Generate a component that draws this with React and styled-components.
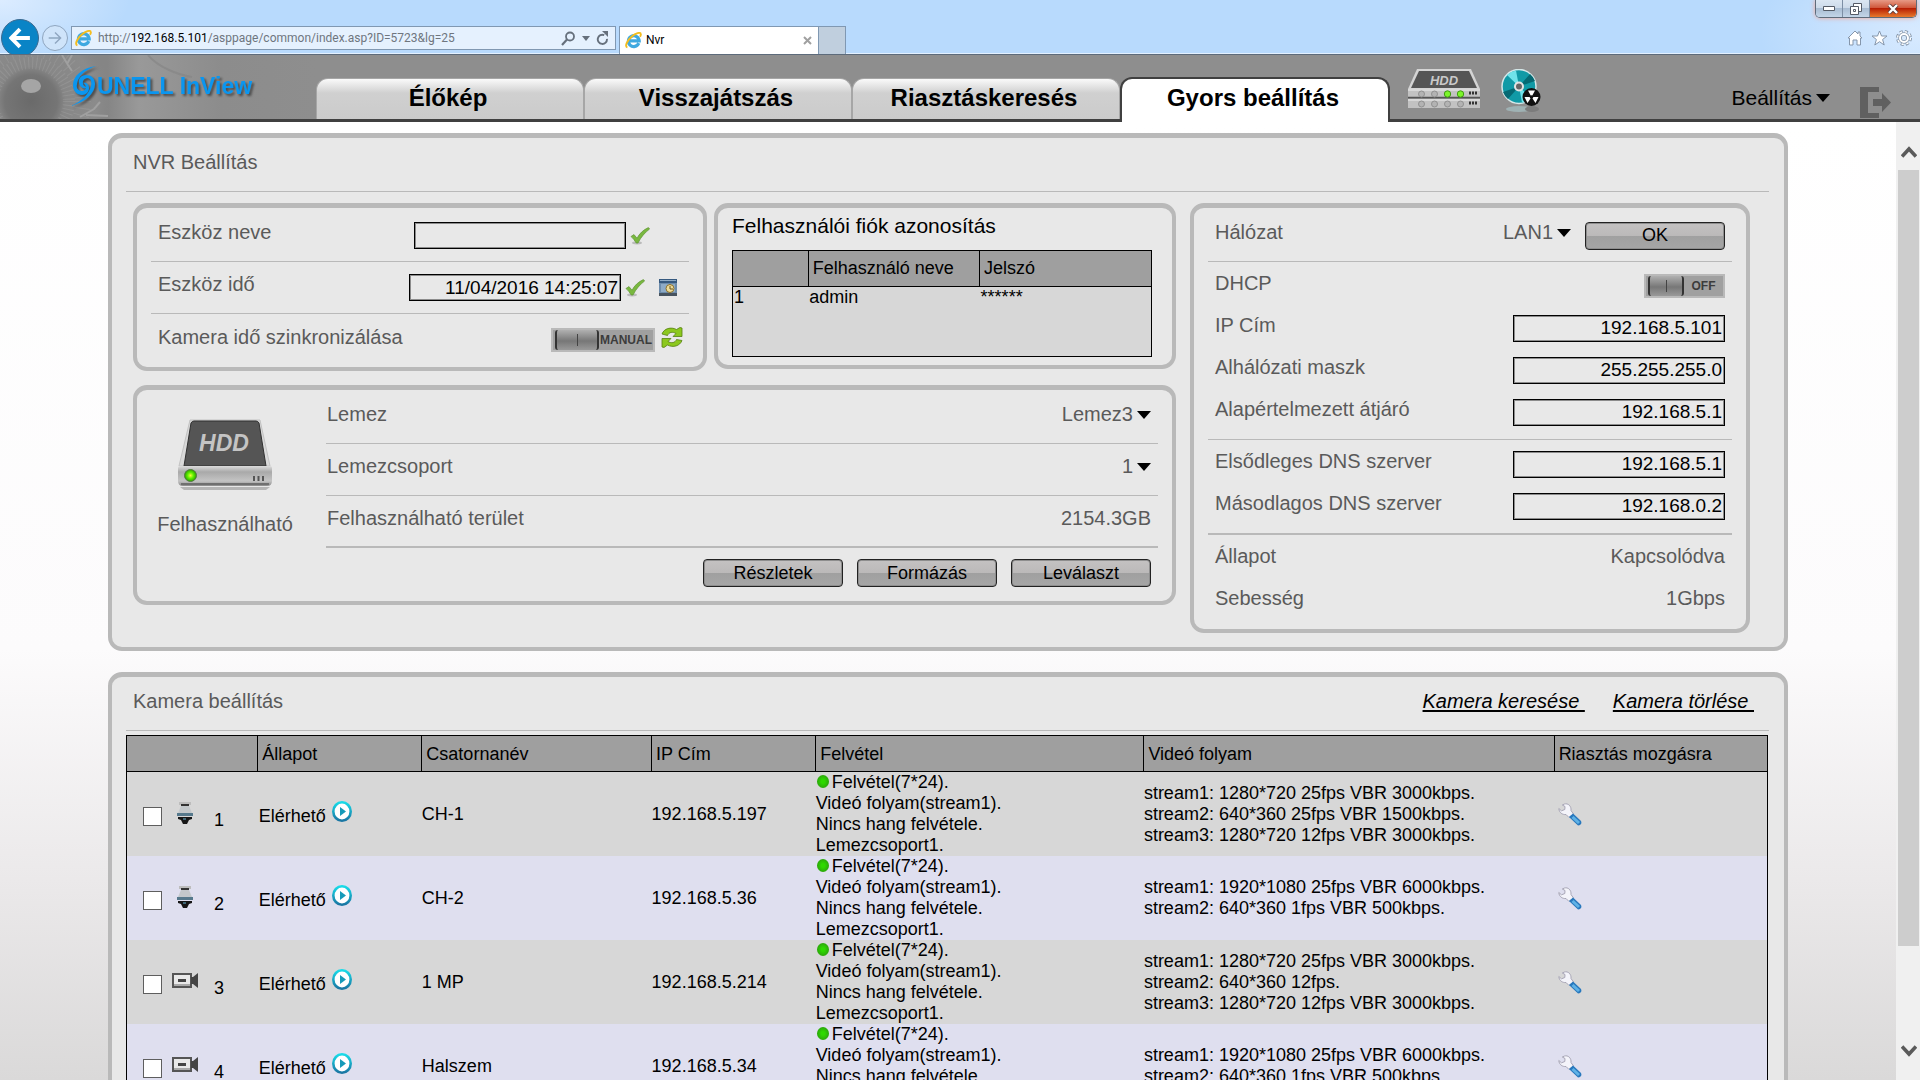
import React from "react";
//Style
import styled, { createGlobalStyle } from "styled-components";

//Data
const tabs = ["Élőkép", "Visszajátszás", "Riasztáskeresés", "Gyors beállítás"];

const recording = [
  "Felvétel(7*24).",
  "Videó folyam(stream1).",
  "Nincs hang felvétele.",
  "Lemezcsoport1.",
];

const cameras = [
  {
    id: 1,
    type: "dome",
    name: "CH-1",
    ip: "192.168.5.197",
    streams: [
      "stream1: 1280*720 25fps VBR 3000kbps.",
      "stream2: 640*360 25fps VBR 1500kbps.",
      "stream3: 1280*720 12fps VBR 3000kbps.",
    ],
  },
  {
    id: 2,
    type: "dome",
    name: "CH-2",
    ip: "192.168.5.36",
    streams: [
      "stream1: 1920*1080 25fps VBR 6000kbps.",
      "stream2: 640*360 1fps VBR 500kbps.",
    ],
  },
  {
    id: 3,
    type: "box",
    name: "1 MP",
    ip: "192.168.5.214",
    streams: [
      "stream1: 1280*720 25fps VBR 3000kbps.",
      "stream2: 640*360 12fps.",
      "stream3: 1280*720 12fps VBR 3000kbps.",
    ],
  },
  {
    id: 4,
    type: "box",
    name: "Halszem",
    ip: "192.168.5.34",
    streams: [
      "stream1: 1920*1080 25fps VBR 6000kbps.",
      "stream2: 640*360 1fps VBR 500kbps.",
    ],
  },
];

const addressFields = [
  { id: "ip", label: "IP Cím", value: "192.168.5.101" },
  { id: "mask", label: "Alhálózati maszk", value: "255.255.255.0" },
  { id: "gateway", label: "Alapértelmezett átjáró", value: "192.168.5.1" },
];

const dnsFields = [
  { id: "dns1", label: "Elsődleges DNS szerver", value: "192.168.5.1" },
  { id: "dns2", label: "Másodlagos DNS szerver", value: "192.168.0.2" },
];

// Icons
const IeIcon = () => (
  <svg width="17" height="17" viewBox="0 0 17 17" aria-hidden="true">
    <path
      d="M13.8 11.2A5.4 5.4 0 1 1 14.2 8.9H4.6"
      fill="none"
      stroke="#3fa9e0"
      strokeWidth="3.2"
    />
    <path
      d="M2.4 15.4C-.6 14.6 2 8.6 6.8 4.6 10.6 1.4 15.4-.4 15.8 2c.2 1-.3 2-.8 2.8"
      fill="none"
      stroke="#f4bd1e"
      strokeWidth="1.9"
    />
  </svg>
);

const Arrow = ({ size, back }) => (
  <svg width={size} height={size} viewBox="0 0 20 20" aria-hidden="true">
    <path
      d={back ? "M19 10H3M10 2 2 10l8 8" : "M1 10h16M10 2l8 8-8 8"}
      fill="none"
      stroke={back ? "#fff" : "#8fa6c0"}
      strokeWidth={back ? 3.6 : 2}
    />
  </svg>
);

const SearchIcon = () => (
  <svg width="15" height="15" viewBox="0 0 15 15" aria-hidden="true">
    <circle cx="9" cy="5.5" r="4" fill="none" stroke="#66707c" strokeWidth="1.8" />
    <path d="M6 8.6 1 14" stroke="#66707c" strokeWidth="2.2" />
  </svg>
);

const RefreshIcon = () => (
  <svg width="13" height="14" viewBox="0 0 13 14" aria-hidden="true">
    <path
      d="M10.6 6.2A4.6 4.6 0 1 1 6.8 3.6"
      fill="none"
      stroke="#66707c"
      strokeWidth="1.9"
      transform="rotate(20 6 8)"
    />
    <path d="M6 0h6v6z" fill="#66707c" />
  </svg>
);

const Triangle = () => (
  <svg width="14" height="8" viewBox="0 0 14 8" aria-hidden="true">
    <path d="M0 0h14L7 8z" fill="#000" />
  </svg>
);

const SmallTriangle = () => (
  <svg width="8" height="5" viewBox="0 0 8 5" aria-hidden="true">
    <path d="M0 0h8L4 5z" fill="#66707c" />
  </svg>
);

const CheckIcon = () => (
  <svg width="20" height="18" viewBox="0 0 20 18" aria-hidden="true">
    <ellipse cx="7" cy="16" rx="5" ry="1.4" fill="#bbb" />
    <path
      d="M1 9.5 4 7.6l3 3.6C9.6 6.5 13 3 18.4.6L19.6 2C15 5.500 10.800 10.200 8 16H6.200C4.800 13.400 3 11.200 1 9.500z"
      fill="#79b83f"
      stroke="#5f9433"
      strokeWidth=".7"
    />
  </svg>
);

const CalendarIcon = () => (
  <svg width="18" height="17" viewBox="0 0 18 17" aria-hidden="true">
    <path d="M0 0h18v17H0z" fill="#6d8cab" />
    <path d="M0 0h18v4H0z" fill="#36597f" />
    <path d="M1 1h16v1H1z" fill="#8fabc6" />
    <path d="M0 14h18v3H0z" fill="#47535f" />
    <path d="M2 5h14v8H2z" fill="#8eabc7" />
    <circle cx="11" cy="9.500" r="4" fill="#eedd9b" stroke="#8d6f26" />
    <path d="M11 7v3h3" fill="none" stroke="#6a521a" />
  </svg>
);

const SyncIcon = () => (
  <svg width="22" height="21" viewBox="0 0 22 21" aria-hidden="true">
    <g fill="#8cc81e" stroke="#557f12" strokeWidth=".8">
      <path d="M1 7C3 1.500 10-.5 15.500 2.500L19 .5 21 1v8.500h-9l3-3C11.500 4.500 8 5 6.500 8.500z" />
      <path d="M21 13.500c-2 5.500-9 7.500-14.500 4.500L3 20.500 1 20v-8.500h9l-3 3c3.500 2 7 1.500 8.500-2z" />
    </g>
  </svg>
);

const HddIcon = () => (
  <svg width="96" height="72" viewBox="0 0 96 72" aria-hidden="true">
    <defs>
      <linearGradient id="hddFront" x1="0" y1="0" x2="0" y2="1">
        <stop offset="0" stopColor="#dcdcdc" />
        <stop offset=".3" stopColor="#a9a9a9" />
        <stop offset=".75" stopColor="#c4c4c4" />
        <stop offset="1" stopColor="#8a8a8a" />
      </linearGradient>
      <radialGradient id="hddLed">
        <stop offset="0" stopColor="#f0ff3a" />
        <stop offset=".5" stopColor="#5bf000" />
        <stop offset="1" stopColor="#2f9c00" />
      </radialGradient>
    </defs>
    <path d="M3 69h90l-4 3H7z" fill="#b5b5b5" />
    <path d="M13 2h70l10 46H2z" fill="#d9d9d9" stroke="#c2c2c2" />
    <path d="M17 3h62q2 0 3 2l7 43H7l7-43q1-2 3-2z" fill="#555" stroke="#303030" />
    <path d="M1 50q0-2 2-2h90q2 0 2 2v13q0 5-5 5H6q-5 0-5-5z" fill="url(#hddFront)" />
    <path d="M4 66h88" stroke="#707070" strokeWidth="2" />
    <circle cx="13.500" cy="57.500" r="6" fill="url(#hddLed)" stroke="#537a45" />
    <path d="M77 58v5M81.500 58v5M86 58v5" stroke="#555" strokeWidth="2" />
    <text
      x="47"
      y="33"
      textAnchor="middle"
      fill="#c4c4c4"
      fontFamily="Liberation Sans, sans-serif"
      fontSize="23"
      fontStyle="italic"
      fontWeight="bold"
    >
      HDD
    </text>
  </svg>
);

const ServerIcon = () => (
  <svg width="74" height="40" viewBox="0 0 74 40" aria-hidden="true">
    <path d="M10 0h54l9 20H1z" fill="#d4d4d4" />
    <path d="M12 2h50l8 17H4z" fill="#555" />
    <path d="M1 20h72v8H1zM1 30h72v9H1z" fill="#c2c2c2" />
    <path d="M1 21h72M1 31h72" stroke="#eee" />
    <path d="M1 28.500h72" stroke="#555" strokeWidth="1.500" />
    <g fill="#b3b3b3" stroke="#909090">
      <circle cx="14.500" cy="25" r="3" />
      <circle cx="27.500" cy="25" r="3" />
      <circle cx="14.500" cy="35" r="3" />
      <circle cx="27.500" cy="35" r="3" />
      <circle cx="40.500" cy="35" r="3" />
      <circle cx="53.500" cy="35" r="3" />
    </g>
    <g fill="#7cf52a" stroke="#3f9a12">
      <circle cx="40.500" cy="25" r="3.200" />
      <circle cx="53.500" cy="25" r="3.200" />
    </g>
    <path d="M62 24h8M62 34h8" stroke="#333" strokeWidth="3" strokeDasharray="2 1" />
    <text
      x="37"
      y="16"
      textAnchor="middle"
      fill="#c9c9c9"
      fontFamily="Liberation Sans, sans-serif"
      fontSize="13"
      fontStyle="italic"
      fontWeight="bold"
    >
      HDD
    </text>
  </svg>
);

const DiscIcon = () => (
  <svg width="40" height="44" viewBox="0 0 40 44" aria-hidden="true">
    <ellipse cx="18" cy="40" rx="13" ry="3" fill="#9fb2b4" />
    <ellipse cx="31" cy="40" rx="7" ry="3" fill="#7c7c7c" />
    <circle cx="18" cy="17.500" r="17" fill="#109aa6" stroke="#d5e7e8" strokeWidth="1.500" />
    <path d="M18 17.500 6 6A17 17 0 0 1 15 1.500zM18 17.500 30 29A17 17 0 0 1 21 33.500z" fill="#6fe3ea" />
    <path d="M18 17.500 29 5a17 17 0 0 1 5 7zM18 17.500 7 30a17 17 0 0 1-5-7z" fill="#056973" />
    <circle cx="18" cy="17.500" r="5" fill="#e4e4e4" />
    <circle cx="18" cy="17.500" r="3" fill="#666" />
    <circle cx="30.500" cy="28" r="9" fill="#111" />
    <path
      d="M30.500 28 27 21.500h7zM30.500 28H23.500l3 6zM30.500 28h7l-3 6z"
      fill="#fff"
    />
    <circle cx="30.500" cy="28" r="1.800" fill="#111" />
  </svg>
);

const LogoutIcon = () => (
  <svg width="32" height="31" viewBox="0 0 32 31" aria-hidden="true">
    <path d="M19 0H0v31h19v-5H8V5h11z" fill="#606060" />
    <path d="M13 12h9V6l9 9.500L22 25v-6h-9z" fill="#606060" />
  </svg>
);

const EyeArt = () => (
  <svg width="316" height="64" viewBox="0 0 316 64" aria-hidden="true">
    <defs>
      <linearGradient id="eyeSkin" x1="0" x2="1">
        <stop offset="0" stopColor="#858585" />
        <stop offset=".34" stopColor="#858585" />
        <stop offset=".44" stopColor="#999" />
        <stop offset=".7" stopColor="#8c8c8c" />
        <stop offset="1" stopColor="#8e8e8e" />
      </linearGradient>
      <radialGradient id="eyeIris">
        <stop offset="0" stopColor="#6a6a6a" />
        <stop offset=".32" stopColor="#757575" />
        <stop offset=".42" stopColor="#878787" />
        <stop offset=".8" stopColor="#8b8b8b" />
        <stop offset="1" stopColor="#858585" stopOpacity="0" />
      </radialGradient>
    </defs>
    <path d="M0 0h316v64H0z" fill="url(#eyeSkin)" />
    <circle cx="31" cy="46" r="82" fill="url(#eyeIris)" />
    <g fill="none" stroke="#a0a0a0" opacity=".45">
      <circle cx="31" cy="46" r="38" strokeWidth="12" strokeDasharray="1 3" />
      <circle cx="31" cy="46" r="52" strokeWidth="16" strokeDasharray="1 6" />
    </g>
    <path d="m62 0 6 10 4 6M72 0l-5 9M80 62l14-8 6-7M86 60l22 1" fill="none" stroke="#a0a0a0" strokeWidth="2" />
    <ellipse cx="31" cy="31" rx="10" ry="7" fill="#a5a5a5" />
    <path d="M148 0c10 12 30 20 44 22" fill="none" stroke="#848484" strokeWidth="2" opacity=".6" />
  </svg>
);

const Swirl = () => (
  <svg width="26" height="42" viewBox="0 0 26 42" aria-hidden="true">
    <g fill="#0a96f0">
      <path d="M25 1C11 3 2 11 2 20c0 6 4 10 9 10 4 0 7-3 7-7s-3-6-6-5c4 1 4 8-1 8-4 0-6-3-5-7C7 11 14 5 25 1z" />
      <path d="M0 41c14-4 24-12 24-22 0-6-4-9-9-9s-8 4-7 8c1 5 6 7 8 4-5 0-6-8 0-9 4 0 5 4 4 8-2 8-9 15-20 20z" />
    </g>
  </svg>
);

const DomeIcon = () => (
  <svg width="16" height="24" viewBox="0 0 16 24" aria-hidden="true">
    <path d="M2 1h12v3H2z" fill="#bdbdbd" />
    <path d="M4 3h8v2H4z" fill="#333" />
    <path d="M4 5h8l3 7H1z" fill="#c3c8cb" />
    <path d="M0 12h16v3H0z" fill="#56798c" />
    <path d="M1 16h14v2l-3 1-2 4H6l-2-4-3-1z" fill="#161616" />
    <path d="M6 17h3v2H6z" fill="#3f6675" />
  </svg>
);

const BoxCamIcon = () => (
  <svg width="26" height="16" viewBox="0 0 26 16" aria-hidden="true">
    <path d="M1 1h18v13H1z" fill="#e9e9e9" stroke="#555" strokeWidth="2" />
    <path d="M2 11h16v2H2z" fill="#aaa" />
    <path d="M6 6h8v3H6z" fill="#444" />
    <path d="M19 4h2l5-4v15l-5-4h-2z" fill="#444" />
  </svg>
);

const PlayIcon = () => (
  <svg width="20" height="21" viewBox="0 0 20 21" aria-hidden="true">
    <defs>
      <linearGradient id="playRing" x1="0" y1="0" x2="0" y2="1">
        <stop offset="0" stopColor="#19dbe8" />
        <stop offset="1" stopColor="#1a76a3" />
      </linearGradient>
    </defs>
    <ellipse cx="10" cy="10.500" rx="8.700" ry="9.200" fill="#fff" stroke="url(#playRing)" strokeWidth="2.600" />
    <path d="M8 6 14 10.500 8 15z" fill="#169ab9" />
  </svg>
);

const WrenchIcon = () => (
  <svg width="24" height="23" viewBox="0 0 24 23" aria-hidden="true">
    <path
      d="M6.500 1C10 0 13.500 3 13 7.500L15.500 11 11 14.500 8 11.500C4.500 12 1 9.500.8 5.500l2.700 2.300L6.800 6.500 7 3.500 4.300 2z"
      fill="#f4f4fa"
      stroke="#a8a6b6"
    />
    <path d="M15 10.500 23 18q1.500 4-3 4.500L11 14z" fill="#2878bd" />
    <path d="m14.500 14 6.500 6" stroke="#5fb2e6" strokeWidth="3" />
  </svg>
);

const Chevron = ({ down }) => (
  <svg width="16" height="13" viewBox="0 0 16 13" aria-hidden="true">
    <path
      d={down ? "M1 2.500 8 10l7-7.500" : "M1 10.500 8 3l7 7.500"}
      fill="none"
      stroke="#5a5a5a"
      strokeWidth="3.600"
    />
  </svg>
);

// Drop-down with its own arrow
const Picker = ({ id, value }) => (
  <PickerWrap>
    <PickerSelect id={id} defaultValue={value}>
      <option>{value}</option>
    </PickerSelect>
    <Triangle />
  </PickerWrap>
);

const Browser = () => (
  <TopBar>
    <Nav>
      <BackButton aria-label="Vissza">
        <Arrow size={22} back />
      </BackButton>
      <ForwardButton aria-label="Előre">
        <Arrow size={14} />
      </ForwardButton>
      <Address>
        <IeIcon />
        <Url>
          http://<b>192.168.5.101</b>/asppage/common/index.asp?ID=5723&amp;lg=25
        </Url>
        <SearchIcon />
        <SmallTriangle />
        <RefreshIcon />
      </Address>
      <PageTab>
        <IeIcon />
        <span>Nvr</span>
        <TabClose aria-label="Lap bezárása">
          <svg width="9" height="9" viewBox="0 0 9 9">
            <path d="m1 1 7 7M8 1 1 8" stroke="#a0a0a0" strokeWidth="2" />
          </svg>
        </TabClose>
      </PageTab>
      <NewTab aria-label="Új lap" />
    </Nav>
    <WindowSide>
      <WindowButtons>
        <WindowButton aria-label="Kis méret">
          <svg width="12" height="6" viewBox="0 0 12 6">
            <path d="M.5.500h11v4H.5z" fill="#fff" stroke="#555b66" />
          </svg>
        </WindowButton>
        <WindowButton aria-label="Előző méret">
          <svg width="12" height="12" viewBox="0 0 12 12">
            <path d="M3.500.500h8v8h-8z" fill="#fff" stroke="#555b66" />
            <path d="M.5 3.500h8v8h-8z" fill="#fff" stroke="#555b66" />
            <path d="M3.500 6.500h2v2h-2z" fill="none" stroke="#555b66" />
          </svg>
        </WindowButton>
        <WindowButton $close aria-label="Bezárás">
          <svg width="12" height="10" viewBox="0 0 12 10">
            <path d="m2 1 8 8M10 1 2 9" stroke="#5c3a3a" strokeWidth="4" />
            <path d="m2 1 8 8M10 1 2 9" stroke="#fff" strokeWidth="2.400" />
          </svg>
        </WindowButton>
      </WindowButtons>
      <Tools>
        <svg width="16" height="16" viewBox="0 0 16 16" fill="#fff" stroke="#8596ab">
          <path d="M8 1 1 8h1.500v7H6v-5h4v5h3.500V8H15l-2-2V2h-2v2z" />
        </svg>
        <svg width="17" height="16" viewBox="0 0 17 16" fill="#fff" stroke="#8596ab">
          <path d="m8.500 1 2 5h5.500l-4.400 3.500 1.600 5.500-4.700-3.300L3.800 15l1.600-5.500L1 6h5.500z" />
        </svg>
        <svg width="16" height="16" viewBox="0 0 16 16">
          <circle cx="8" cy="8" r="6.200" fill="none" stroke="#8596ab" strokeWidth="3.600" strokeDasharray="2.900 1.970" />
          <circle cx="8" cy="8" r="6" fill="none" stroke="#fff" strokeWidth="2.200" strokeDasharray="2.200 2.510" />
          <circle cx="8" cy="8" r="4" fill="#d6e8fb" stroke="#8596ab" strokeWidth="3.600" />
          <circle cx="8" cy="8" r="4" fill="none" stroke="#fff" strokeWidth="2" />
        </svg>
      </Tools>
    </WindowSide>
  </TopBar>
);

const Header = () => (
  <HeaderBar>
    <Brand>
      <EyeArt />
      <Logo>
        <Swirl />
        <span>UNELL InView</span>
      </Logo>
    </Brand>
    <Tabs>
      {tabs.map((tab, i) => (
        <Tab key={tab} $active={i === 3}>
          {tab}
        </Tab>
      ))}
    </Tabs>
    <StatusIcons>
      <ServerIcon />
      <DiscIcon />
    </StatusIcons>
    <SettingsButton>
      Beállítás
      <Triangle />
    </SettingsButton>
    <LogoutButton aria-label="Kilépés">
      <LogoutIcon />
    </LogoutButton>
  </HeaderBar>
);

const DevicePanel = () => (
  <Panel>
    <Row $line $end={39}>
      <Label htmlFor="device">Eszköz neve</Label>
      <Group $gap={4}>
        <TextBox id="device" />
        <IconButton aria-label="Név mentése">
          <CheckIcon />
        </IconButton>
      </Group>
    </Row>
    <Row $line $end={12}>
      <Label htmlFor="time">Eszköz idő</Label>
      <Group $gap={4}>
        <TextBox id="time" defaultValue="11/04/2016 14:25:07" />
        <IconButton aria-label="Idő mentése">
          <CheckIcon />
        </IconButton>
        <IconButton $apart aria-label="Naptár">
          <CalendarIcon />
        </IconButton>
      </Group>
    </Row>
    <Row $end={6}>
      <Label htmlFor="sync">Kamera idő szinkronizálása</Label>
      <Group $gap={6}>
        <Switch>
          <Knob type="checkbox" id="sync" $wide />
          <span>MANUAL</span>
        </Switch>
        <IconButton $raised aria-label="Szinkronizálás">
          <SyncIcon />
        </IconButton>
      </Group>
    </Row>
  </Panel>
);

const UserPanel = () => (
  <UserCard>
    <h3>Felhasználói fiók azonosítás</h3>
    <UserBox>
      <UserTable>
        <thead>
          <tr>
            <th />
            <th>Felhasználó neve</th>
            <th>Jelszó</th>
          </tr>
        </thead>
        <tbody>
          <tr>
            <td>1</td>
            <td>admin</td>
            <td>******</td>
          </tr>
        </tbody>
      </UserTable>
    </UserBox>
  </UserCard>
);

const DiskPanel = () => (
  <DiskCard>
    <DiskState>
      <HddIcon />
      <span>Felhasználható</span>
    </DiskState>
    <DiskRows>
      <Row $line $end={7} $start={1}>
        <Label htmlFor="disk">Lemez</Label>
        <Picker id="disk" value="Lemez3" />
      </Row>
      <Row $line $end={7} $start={1}>
        <Label htmlFor="group">Lemezcsoport</Label>
        <Picker id="group" value="1" />
      </Row>
      <Row $line $thick $end={7} $start={1}>
        <Label as="span">Felhasználható terület</Label>
        <Label as="span">2154.3GB</Label>
      </Row>
      <DiskActions>
        <Button>Részletek</Button>
        <Button>Formázás</Button>
        <Button>Leválaszt</Button>
      </DiskActions>
    </DiskRows>
  </DiskCard>
);

const NetworkPanel = () => (
  <Panel>
    <Row $line $end={7}>
      <Label htmlFor="lan">Hálózat</Label>
      <Group $gap={14}>
        <Picker id="lan" value="LAN1" />
        <Button>OK</Button>
      </Group>
    </Row>
    <Section $line>
      <Row $short $end={7}>
        <Label htmlFor="dhcp">DHCP</Label>
        <Switch>
          <Knob type="checkbox" id="dhcp" />
          <span>OFF</span>
        </Switch>
      </Row>
      {addressFields.map((field) => (
        <Row $short $end={7} key={field.id}>
          <Label htmlFor={field.id}>{field.label}</Label>
          <TextBox id={field.id} defaultValue={field.value} />
        </Row>
      ))}
    </Section>
    <Section $line $thick>
      {dnsFields.map((field) => (
        <Row $short $end={7} key={field.id}>
          <Label htmlFor={field.id}>{field.label}</Label>
          <TextBox id={field.id} defaultValue={field.value} />
        </Row>
      ))}
    </Section>
    <Section>
      <Row $short $end={7}>
        <Label as="span">Állapot</Label>
        <Label as="span">Kapcsolódva</Label>
      </Row>
      <Row $short $end={7}>
        <Label as="span">Sebesség</Label>
        <Label as="span">1Gbps</Label>
      </Row>
    </Section>
  </Panel>
);

const CameraRow = ({ camera }) => (
  <tr>
    <td>
      <CameraId>
        <Tick type="checkbox" aria-label={`Kamera ${camera.id}`} />
        <CameraType>
          {camera.type === "dome" ? <DomeIcon /> : <BoxCamIcon />}
        </CameraType>
        <CameraNumber>{camera.id}</CameraNumber>
      </CameraId>
    </td>
    <td>
      <CameraState>
        <span>Elérhető</span>
        <IconButton $raised aria-label="Lejátszás">
          <PlayIcon />
        </IconButton>
      </CameraState>
    </td>
    <td>{camera.name}</td>
    <td>{camera.ip}</td>
    <td>
      {recording.map((line, i) => (
        <Line key={line}>
          {i === 0 && <Dot />}
          {line}
        </Line>
      ))}
    </td>
    <td>
      {camera.streams.map((line) => (
        <Line key={line}>{line}</Line>
      ))}
    </td>
    <td>
      <IconButton $inset aria-label="Riasztás beállítása">
        <WrenchIcon />
      </IconButton>
    </td>
  </tr>
);

export default function App() {
  return (
    <Shell>
      <GlobalStyle />
      <Browser />
      <Header />
      <Body>
        <Content>
          <Card>
            <CardHead>
              <h2>NVR Beállítás</h2>
            </CardHead>
            <Panels>
              <LeftColumn>
                <TopPanels>
                  <DevicePanel />
                  <UserPanel />
                </TopPanels>
                <DiskPanel />
              </LeftColumn>
              <NetworkPanel />
            </Panels>
          </Card>
          <Card>
            <CardHead>
              <h2>Kamera beállítás</h2>
              <Links>
                <a href="#search">{"Kamera keresése "}</a>
                <a href="#delete">{"Kamera törlése "}</a>
              </Links>
            </CardHead>
            <CameraTable>
              <colgroup>
                <col width="8%" />
                <col width="10%" />
                <col width="14%" />
                <col width="10%" />
                <col width="20%" />
                <col width="25%" />
                <col width="13%" />
              </colgroup>
              <thead>
                <tr>
                  <th />
                  <th>Állapot</th>
                  <th>Csatornanév</th>
                  <th>IP Cím</th>
                  <th>Felvétel</th>
                  <th>Videó folyam</th>
                  <th>Riasztás mozgásra</th>
                </tr>
              </thead>
              <tbody>
                {cameras.map((camera) => (
                  <CameraRow camera={camera} key={camera.id} />
                ))}
              </tbody>
            </CameraTable>
          </Card>
        </Content>
        <ScrollBar>
          <ScrollButton aria-label="Fel">
            <Chevron />
          </ScrollButton>
          <ScrollTrack>
            <ScrollThumb />
          </ScrollTrack>
          <ScrollButton aria-label="Le">
            <Chevron down />
          </ScrollButton>
        </ScrollBar>
      </Body>
    </Shell>
  );
}

const GlobalStyle = createGlobalStyle`
  * {
    box-sizing: border-box;
  }
  body {
    margin: 0;
    font-family: "Liberation Sans", Arial, sans-serif;
    font-size: 18px;
    line-height: 21px;
    color: #000;
  }
  h2, h3 {
    margin: 0;
    font-weight: normal;
  }
  button, input, select {
    margin: 0;
    padding: 0;
    border: 0;
    font-family: inherit;
    font-size: inherit;
    color: inherit;
    background: none;
  }
  svg {
    display: block;
    flex-shrink: 0;
  }
`;

const Shell = styled.div`
  display: flex;
  flex-direction: column;
  height: 100vh;
  overflow: hidden;
`;

const TopBar = styled.div`
  display: flex;
  justify-content: space-between;
  flex-shrink: 0;
  height: 55px;
  overflow: hidden;
  border-bottom: 1px solid #5d6b7b;
  box-shadow: inset 0 -1px #e4f1ff;
  background: radial-gradient(ellipse 130px 60px at 0 0, #dcecff, transparent),
    radial-gradient(ellipse 160px 90px at 100% 60%, #d8eaff, transparent),
    #b8dafd;
`;

const Nav = styled.div`
  display: flex;
  align-items: flex-start;
  padding: 26px 0 0 1px;
`;

const BackButton = styled.button`
  display: flex;
  align-items: center;
  justify-content: center;
  width: 38px;
  height: 38px;
  margin-top: -7px;
  border: 1px solid #3c6a90;
  border-radius: 50%;
  background: #0a84c6;
`;

const ForwardButton = styled.button`
  display: flex;
  align-items: center;
  justify-content: center;
  width: 26px;
  height: 26px;
  margin: -1px 3px 0;
  border: 1px solid #8fa6c0;
  border-radius: 50%;
  background: #cfe4fa;
`;

const Address = styled.div`
  display: flex;
  align-items: center;
  gap: 6px;
  width: 545px;
  height: 24px;
  padding: 0 6px 0 3px;
  border: 1px solid #8098b2;
  background: #e5f1fe;
`;

const Url = styled.span`
  flex: 1;
  font-family: Roboto, "Noto Sans", sans-serif;
  font-size: 12px;
  color: #6f767e;
  b {
    font-weight: normal;
    color: #000;
  }
`;

const PageTab = styled.div`
  display: flex;
  align-items: center;
  gap: 4px;
  width: 200px;
  height: 28px;
  margin-left: 3px;
  padding: 0 6px 0 5px;
  border: 1px solid #8098b2;
  border-bottom: 0;
  background: #fff;
  font-family: Roboto, "Noto Sans", sans-serif;
  font-size: 12px;
`;

const TabClose = styled.button`
  margin-left: auto;
`;

const NewTab = styled.button`
  width: 27px;
  height: 28px;
  border: 1px solid #8098b2;
  border-width: 1px 1px 0 0;
  background: #c0cfde;
`;

const WindowSide = styled.div`
  display: flex;
  flex-direction: column;
  align-items: flex-end;
  gap: 12px;
  padding-right: 3px;
`;

const WindowButtons = styled.div`
  display: flex;
  border: 1px solid #5f6b7a;
  border-top: 0;
  border-radius: 0 0 5px 5px;
  box-shadow: 0 0 5px #f3a491;
  overflow: hidden;
`;

const WindowButton = styled.button`
  display: flex;
  align-items: center;
  justify-content: center;
  width: ${(props) => (props.$close ? "46px" : "27px")};
  height: 17px;
  border-right: ${(props) => (props.$close ? "0" : "1px solid #7d8fa5")};
  background: ${(props) =>
    props.$close
      ? "linear-gradient(#e79a86, #d0583c 45%, #b81f04 50%, #e8792c)"
      : "linear-gradient(#dbe6f2, #cddbea 45%, #a9bdd3 50%, #c3d5e8)"};
`;

const Tools = styled.div`
  display: flex;
  gap: 8px;
  padding-right: 5px;
`;

const HeaderBar = styled.header`
  display: flex;
  flex-shrink: 0;
  height: 67px;
  border-bottom: 3px solid #404040;
  background: #8e8e8e;
`;

const Brand = styled.div`
  position: relative;
  width: 316px;
`;

const Logo = styled.div`
  position: absolute;
  top: 10px;
  left: 71px;
  display: flex;
  align-items: center;
  color: #0a96f0;
  font-size: 23px;
  font-weight: bold;
  filter: drop-shadow(2px 2px 1px #4b4b4b);
`;

const Tabs = styled.nav`
  display: flex;
  align-items: flex-end;
`;

const Tab = styled.button`
  width: 268px;
  height: ${(props) => (props.$active ? "45px" : "41px")};
  margin-bottom: ${(props) => (props.$active ? "-3px" : "0")};
  padding: 0 4px 3px 0;
  border: 1px solid #a6a6a6;
  border-bottom: 0;
  border-radius: 12px 12px 0 0;
  background: linear-gradient(#fafafa, #d0d0d0 14px, #cbcbcb);
  font-size: 24px;
  font-weight: bold;
  ${(props) =>
    props.$active &&
    `
    width: 270px;
    padding-bottom: 6px;
    border: 2px solid #404040;
    border-bottom: 0;
    background: #fff;
  `}
`;

const StatusIcons = styled.div`
  display: flex;
  gap: 20px;
  padding: 14px 0 0 17px;
`;

const SettingsButton = styled.button`
  display: flex;
  align-items: center;
  gap: 4px;
  margin-left: auto;
  padding-top: 22px;
  font-size: 21px;
`;

const LogoutButton = styled.button`
  display: flex;
  align-items: flex-end;
  padding: 0 28px 1px 30px;
`;

const Body = styled.div`
  display: flex;
  flex: 1;
  min-height: 0;
`;

const Content = styled.main`
  flex: 1;
  padding: 11px 108px 0;
  overflow: hidden;
  background: linear-gradient(#fff, #fcfbfc 55%, #ebe9ea 79%, #dad9d9);
`;

const Card = styled.section`
  margin-bottom: 21px;
  padding-bottom: 14px;
  border: 4px solid #b9b9b9;
  border-top-width: 5px;
  border-radius: 14px;
  background: #e8e8e8;
`;

const CardHead = styled.div`
  display: flex;
  align-items: center;
  justify-content: space-between;
  height: 54px;
  margin: 0 15px 0 14px;
  padding: 0 15px 4px 7px;
  border-bottom: 1px solid #b9b9b9;
  h2 {
    font-size: 20px;
    color: #5a5a5a;
  }
`;

const Links = styled.div`
  display: flex;
  gap: 28px;
  a {
    font-size: 20px;
    font-style: italic;
    color: #000;
    white-space: pre;
    text-underline-offset: 2px;
  }
`;

const Panels = styled.div`
  display: grid;
  grid-template-columns: 1043fr 560fr;
  align-items: start;
  gap: 14px;
  padding: 11px 34px 0 21px;
`;

const LeftColumn = styled.div`
  display: flex;
  flex-direction: column;
  gap: 14px;
`;

const TopPanels = styled.div`
  display: grid;
  grid-template-columns: 574fr 462fr;
  align-items: start;
  gap: 7px;
`;

const Panel = styled.div`
  padding: 2px 14px 1px;
  border: 4px solid #b9b9b9;
  border-top-width: 5px;
  border-radius: 14px;
`;

const Row = styled.div`
  display: flex;
  align-items: center;
  justify-content: space-between;
  height: ${(props) => (props.$short ? "42px" : "52px")};
  padding-left: ${(props) => props.$start || 7}px;
  padding-right: ${(props) => props.$end}px;
  border-bottom: ${(props) => (props.$line ? (props.$thick ? 2 : 1) : 0)}px
    solid #b9b9b9;
`;

const Section = styled.div`
  padding: 3px 0 6px;
  border-bottom: ${(props) => (props.$line ? (props.$thick ? 2 : 1) : 0)}px
    solid #b9b9b9;
`;

const Label = styled.label`
  padding-bottom: 6px;
  font-size: 20px;
  color: #5a5a5a;
`;

const Group = styled.div`
  display: flex;
  align-items: center;
  gap: ${(props) => props.$gap}px;
`;

const TextBox = styled.input`
  width: 212px;
  height: 27px;
  padding-right: 2px;
  border: 1px solid #000;
  box-shadow: inset 0 0 0 1px #8c8c8c;
  font-size: 19px;
  text-align: right;
`;

const IconButton = styled.button`
  display: block;
  margin-left: ${(props) => (props.$apart ? "10px" : "0")};
  padding-left: ${(props) => (props.$inset ? "4px" : "0")};
  padding-bottom: ${(props) => (props.$raised ? "6px" : "0")};
`;

const Switch = styled.div`
  display: flex;
  align-items: center;
  height: 24px;
  padding-left: 2px;
  border: 2px solid #b9b9b9;
  background: #a0a0a0;
  color: #3c3c3c;
  font-size: 12px;
  font-weight: bold;
  span {
    flex: 1;
    min-width: 39px;
    padding: 0 1px;
    text-align: center;
  }
`;

const Knob = styled.input`
  appearance: none;
  width: ${(props) => (props.$wide ? "44px" : "36px")};
  height: 20px;
  border: 1px solid #333;
  border-width: 0 2px;
  border-radius: 3px;
  background: linear-gradient(#444, #444) center / 1px 12px no-repeat,
    linear-gradient(#b0b0b0, #777 55%, #999);
`;

const UserCard = styled(Panel)`
  padding: 2px 20px 8px 14px;
  h3 {
    padding: 4px 0 12px;
    font-size: 21px;
    line-height: 24px;
  }
`;

const UserBox = styled.div`
  height: 107px;
  border: 1px solid #000;
  background: #d7d7d7;
`;

const UserTable = styled.table`
  width: 100%;
  border-collapse: collapse;
  table-layout: fixed;
  text-align: left;
  th {
    height: 35px;
    padding: 0 4px;
    border-bottom: 1px solid #000;
    background: #9f9f9f;
    font-weight: normal;
  }
  th + th {
    border-left: 1px solid #000;
  }
  td {
    padding: 0 1px;
  }
  th:nth-child(1) {
    width: 18%;
  }
  th:nth-child(2) {
    width: 41%;
  }
`;

const DiskCard = styled(Panel)`
  display: flex;
  padding-bottom: 14px;
`;

const DiskState = styled.div`
  display: flex;
  flex-direction: column;
  align-items: center;
  gap: 24px;
  width: 175px;
  padding: 26px 27px 0 0;
  font-size: 20px;
  color: #5a5a5a;
`;

const DiskRows = styled.div`
  flex: 1;
`;

const DiskActions = styled.div`
  display: flex;
  justify-content: flex-end;
  gap: 14px;
  padding: 11px 7px 0 0;
`;

const Button = styled.button`
  width: 140px;
  height: 28px;
  border: 1px solid #222;
  border-radius: 4px;
  box-shadow: inset 0 0 0 1px #8e8e8e;
  background: linear-gradient(#c4c2c2, #bbb9b9 50%, #a0a0a0 50%, #a6a6a6);
`;

const PickerWrap = styled.div`
  display: flex;
  align-items: center;
  gap: 4px;
  padding-bottom: 6px;
`;

const PickerSelect = styled.select`
  appearance: none;
  field-sizing: content;
  font-size: 20px;
  line-height: 21px;
  color: #5a5a5a;
`;

const CameraTable = styled.table`
  width: calc(100% - 30px);
  margin: 4px 16px 0 14px;
  border: 1px solid #000;
  border-collapse: collapse;
  table-layout: fixed;
  text-align: left;
  th {
    height: 36px;
    padding: 2px 4px 0;
    border: 1px solid #000;
    background: #9f9f9f;
    font-weight: normal;
  }
  td {
    height: 84px;
    padding: 0;
  }
  tbody tr {
    background: #d7d7d7;
  }
  tbody tr:nth-child(even) {
    background: #dfdfef;
  }
`;

const CameraId = styled.div`
  display: flex;
  align-items: center;
  gap: 10px;
  padding-left: 16px;
`;

const Tick = styled.input`
  appearance: none;
  width: 19px;
  height: 19px;
  margin-top: 4px;
  border: 1px solid #5e5e5e;
  background: #fff;
`;

const CameraType = styled.span`
  display: flex;
  justify-content: center;
  width: 26px;
  padding-bottom: 3px;
`;

const CameraNumber = styled.span`
  padding: 12px 0 0 6px;
`;

const CameraState = styled.div`
  display: flex;
  align-items: center;
  gap: 6px;
  padding-left: 1px;
  span {
    padding-top: 4px;
  }
`;

const Line = styled.div`
  height: 21px;
  white-space: nowrap;
`;

const Dot = styled.span`
  display: inline-block;
  width: 12px;
  height: 13px;
  margin: 0 3px 0 1px;
  border-radius: 50%;
  background: radial-gradient(#2ed800 20%, #2a8a12);
`;

const ScrollBar = styled.div`
  display: flex;
  flex-direction: column;
  width: 24px;
  padding: 12px 1px 12px 2px;
  background: #f0f0f0;
`;

const ScrollButton = styled.button`
  display: flex;
  align-items: center;
  justify-content: center;
  height: 36px;
`;

const ScrollTrack = styled.div`
  flex: 1;
`;

const ScrollThumb = styled.div`
  height: 90%;
  background: #cdcdcd;
`;
